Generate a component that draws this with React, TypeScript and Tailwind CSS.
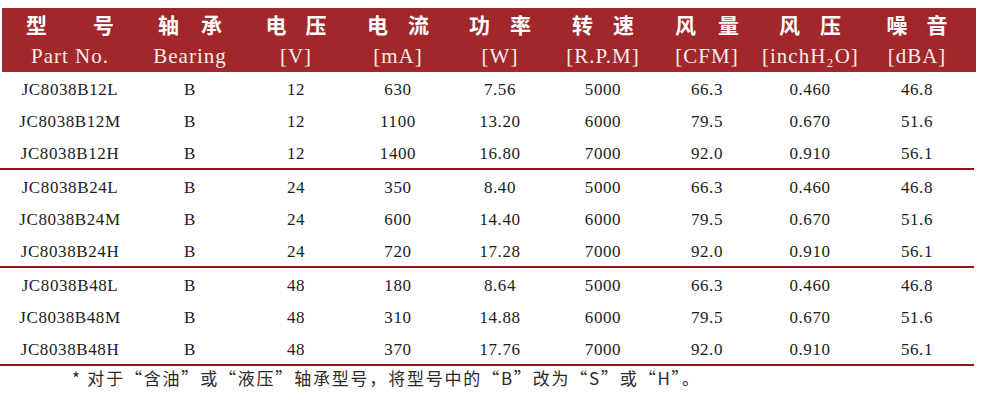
const cols = 'grid grid-cols-[136px_104px_108px_96px_108px_98px_110px_96px_118px]'

const zh: [string, string, string][] = [
  ['型', '号', 'gap-[46px]'],
  ['轴', '承', 'gap-[22px]'],
  ['电', '压', 'gap-[19px]'],
  ['电', '流', 'gap-[20px]'],
  ['功', '率', 'gap-[20px]'],
  ['转', '速', 'gap-[20px]'],
  ['风', '量', 'gap-[22px]'],
  ['风', '压', 'gap-[20px]'],
  ['噪', '音', 'gap-[19px]'],
]

const units = ['Part No.', 'Bearing', '[V]', '[mA]', '[W]', '[R.P.M]', '[CFM]', '[inchH₂O]', '[dBA]']

const groups: string[][][] = [
  [
    ['JC8038B12L', 'B', '12', '630', '7.56', '5000', '66.3', '0.460', '46.8'],
    ['JC8038B12M', 'B', '12', '1100', '13.20', '6000', '79.5', '0.670', '51.6'],
    ['JC8038B12H', 'B', '12', '1400', '16.80', '7000', '92.0', '0.910', '56.1'],
  ],
  [
    ['JC8038B24L', 'B', '24', '350', '8.40', '5000', '66.3', '0.460', '46.8'],
    ['JC8038B24M', 'B', '24', '600', '14.40', '6000', '79.5', '0.670', '51.6'],
    ['JC8038B24H', 'B', '24', '720', '17.28', '7000', '92.0', '0.910', '56.1'],
  ],
  [
    ['JC8038B48L', 'B', '48', '180', '8.64', '5000', '66.3', '0.460', '46.8'],
    ['JC8038B48M', 'B', '48', '310', '14.88', '6000', '79.5', '0.670', '51.6'],
    ['JC8038B48H', 'B', '48', '370', '17.76', '7000', '92.0', '0.910', '56.1'],
  ],
]

export default function App() {
  return (
    <div className="w-[982px] h-[407px] bg-white pt-2 font-['Liberation_Serif','Noto_Sans_CJK_SC',serif]">
      <div className="ml-[2px] w-[974px] bg-[#a1272b]">
        <div className={`${cols} h-8 items-center`}>
          {zh.map(([a, b, gap], i) => (
            <div key={i} className={`flex justify-center ${gap} text-[21px] font-bold text-white font-['Noto_Sans_CJK_SC',sans-serif] leading-none`}>
              <span>{a}</span>
              <span>{b}</span>
            </div>
          ))}
        </div>
        <div className={`${cols} h-8 items-center`}>
          {units.map((u, i) => (
            <div key={i} className="text-center text-[21px] tracking-[1px] text-[#f7ecec] leading-none">
              {u}
            </div>
          ))}
        </div>
      </div>

      {groups.map((rows, g) => (
        <div key={g}>
          <div className="ml-[2px] w-[974px]">
            {rows.map((r, i) => (
              <div key={i} className={`${cols} h-8 items-center pt-[3px]`}>
                {r.map((c, j) => (
                  <div key={j} className="text-center text-[17px] tracking-[0.6px] text-[#1c1c1c] leading-none">
                    {c}
                  </div>
                ))}
              </div>
            ))}
          </div>
          <div className="w-[974px] h-[2px] bg-[#8e1519]" />
        </div>
      ))}

      <div className="pl-[72px] h-6 flex items-center text-[17px] tracking-[1.8px] text-[#2a2a2a] font-['Noto_Sans_CJK_SC',sans-serif]">
        * 对于“含油”或“液压”轴承型号，将型号中的“B”改为“S”或“H”。
      </div>
    </div>
  )
}
